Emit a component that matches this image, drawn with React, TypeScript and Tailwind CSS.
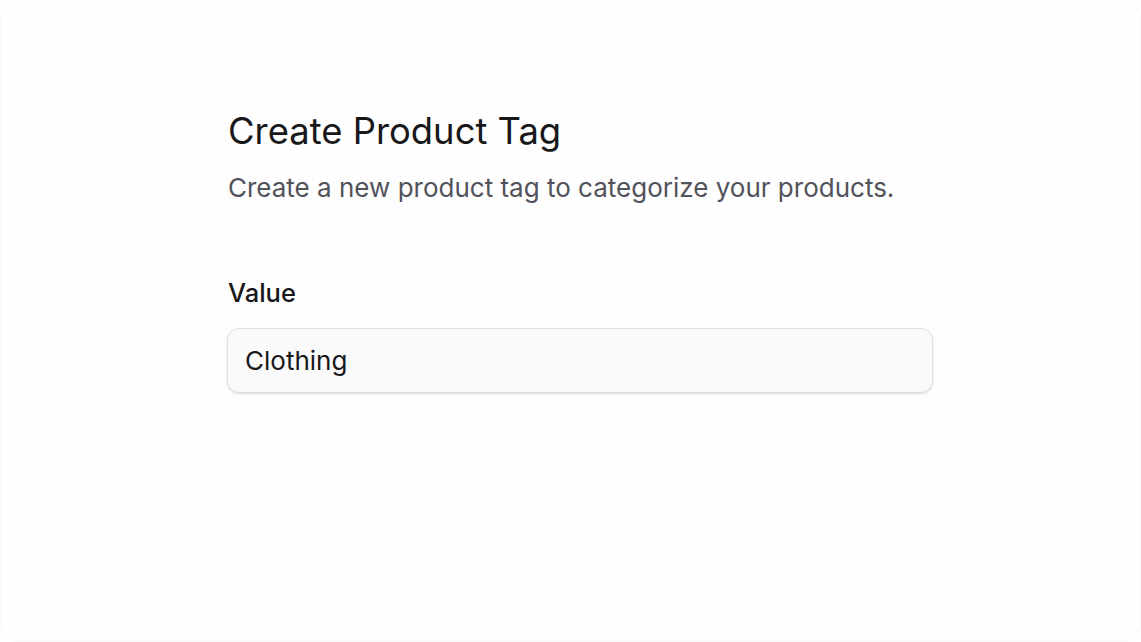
export default function App() {
  return (
    <div className="flex h-[642px] w-[1141px] bg-white font-['Inter',sans-serif]">
      <div className="flex h-full w-full rounded-[16px] border border-[#f9f9f9] bg-[#fefefe]">
        <div className="ml-[226px] mt-[108px] flex w-[706px] flex-col">
          <h1 className="ml-[1px] text-[36.4px] font-normal leading-[44px] text-[#18181b]">Create Product Tag</h1>
          <p className="ml-[1px] mt-[19px] text-[26px] leading-[32px] text-[#52525b]">
            Create a new product tag to categorize your products.
          </p>
          <div className="mt-[73px] flex flex-col gap-[19px]">
            <label className="ml-[1px] text-[25.5px] font-medium leading-[32px] text-[#18181b]">Value</label>
            <input
              defaultValue="Clothing"
              className="h-[65px] w-full rounded-[12px] border border-[#e0e0e3] bg-[#fafafa] px-[17px] text-[26px] text-[#18181b] shadow-[0_1px_2px_rgba(0,0,0,0.14)] outline-none"
            />
          </div>
        </div>
      </div>
    </div>
  );
}
